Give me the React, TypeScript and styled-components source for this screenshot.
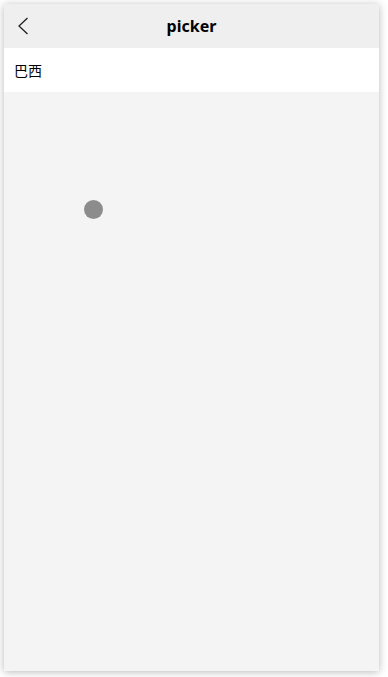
import React from 'react';
import styled, { createGlobalStyle } from 'styled-components';

const GlobalStyle = createGlobalStyle`
  html, body {
    margin: 0;
    padding: 0;
    background: #ffffff;
    font-family: "Noto Sans", "Noto Sans CJK SC", sans-serif;
  }
`;

const Page = styled.div`
  padding: 4px;
  width: 388px;
  height: 677px;
  box-sizing: border-box;
`;

const Device = styled.div`
  position: relative;
  width: 375px;
  height: 667px;
  background: #f4f4f4;
  box-shadow: 0 1px 8px rgba(0, 0, 0, 0.28);
  display: flex;
  flex-direction: column;
  overflow: hidden;
`;

const NavBar = styled.div`
  height: 44px;
  background: #efefef;
  display: flex;
  align-items: center;
  justify-content: center;
  position: relative;
`;

const BackButton = styled.button`
  position: absolute;
  left: 7px;
  top: 10px;
  width: 24px;
  height: 24px;
  padding: 0;
  border: none;
  background: transparent;
  display: flex;
  align-items: center;
  justify-content: center;
`;

const Title = styled.h1`
  margin: 0;
  font-size: 16px;
  font-weight: 700;
  color: #000;
`;

const PickerRow = styled.div`
  height: 44px;
  background: #ffffff;
  display: flex;
  align-items: center;
  padding: 0 10px;
  font-size: 14px;
  color: #000;
`;

const TouchDot = styled.div`
  position: absolute;
  left: 80px;
  top: 196px;
  width: 19px;
  height: 19px;
  border-radius: 50%;
  background: #8c8c8c;
`;

export default function App() {
  return (
    <>
      <GlobalStyle />
      <Page>
        <Device>
          <NavBar>
            <BackButton aria-label="back">
              <svg width="12" height="18" viewBox="0 0 12 18">
                <path d="M10.5 1 L2 9 L10.5 17" fill="none" stroke="#222" strokeWidth="1.3" />
              </svg>
            </BackButton>
            <Title>picker</Title>
          </NavBar>
          <PickerRow>巴西</PickerRow>
          <TouchDot />
        </Device>
      </Page>
    </>
  );
}
